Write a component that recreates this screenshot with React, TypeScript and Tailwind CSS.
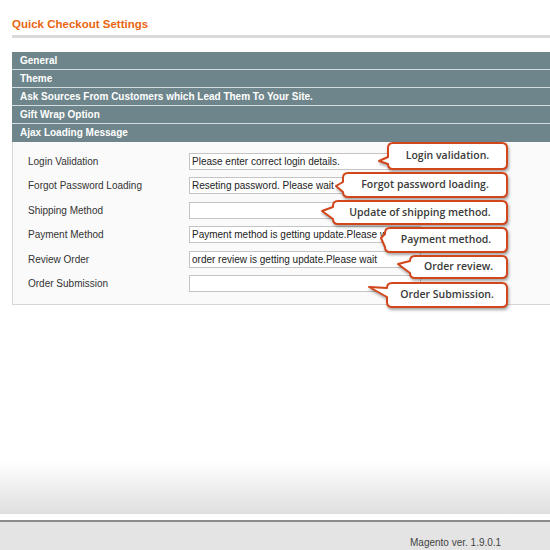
const SECTIONS = [
  'General',
  'Theme',
  'Ask Sources From Customers which Lead Them To Your Site.',
  'Gift Wrap Option',
  'Ajax Loading Message',
]

const FIELDS = [
  { label: 'Login Validation', value: 'Please enter correct login details.' },
  { label: 'Forgot Password Loading', value: 'Reseting password. Please wait' },
  { label: 'Shipping Method', value: '' },
  { label: 'Payment Method', value: 'Payment method is getting update.Please wait' },
  { label: 'Review Order', value: 'order review is getting update.Please wait' },
  { label: 'Order Submission', value: '' },
]

// box edges + tail tip, page coordinates
const CALLOUTS = [
  { text: 'Login validation.', left: 388, top: 143, right: 507, bottom: 169, tipX: 379, tipY: 161 },
  { text: 'Forgot password loading.', left: 343, top: 173, right: 507, bottom: 197, tipX: 336, tipY: 186 },
  { text: 'Update of shipping method.', left: 333, top: 201, right: 507, bottom: 224, tipX: 322, tipY: 211 },
  { text: 'Payment method.', left: 385, top: 228, right: 507, bottom: 252, tipX: 381, tipY: 238 },
  { text: 'Order review.', left: 410, top: 256, right: 507, bottom: 278, tipX: 398, tipY: 264 },
  { text: 'Order Submission.', left: 387, top: 283, right: 507, bottom: 307, tipX: 369, tipY: 287 },
]

type Callout = (typeof CALLOUTS)[number]

function Bubble({ c }: { c: Callout }) {
  const pad = 3
  const x0 = c.tipX - pad
  const y0 = c.top - pad
  const w = c.right - x0 + pad
  const h = c.bottom - y0 + pad
  const bx = c.left - x0
  const t = pad
  const r = w - pad
  const b = h - pad
  const ty = c.tipY - y0
  const tx = c.tipX - x0
  const tTop = Math.max(t + 5, ty - 4)
  const tBot = Math.min(b - 5, ty + 10)
  const rad = 5
  const d = `M ${bx + rad} ${t} H ${r - rad} Q ${r} ${t} ${r} ${t + rad} V ${b - rad} Q ${r} ${b} ${r - rad} ${b} H ${bx + rad} Q ${bx} ${b} ${bx} ${b - rad} V ${tBot} L ${tx} ${ty} L ${bx} ${tTop} V ${t + rad} Q ${bx} ${t} ${bx + rad} ${t} Z`
  return (
    <div className="absolute" style={{ left: x0, top: y0, width: w, height: h }}>
      <svg width={w} height={h} className="absolute left-0 top-0 drop-shadow-[1px_2px_1.5px_rgba(0,0,0,0.35)]">
        <path d={d} fill="#fff" stroke="#d2461b" strokeWidth={2} strokeLinejoin="round" />
      </svg>
      <div
        className="absolute flex items-center justify-center font-['Open_Sans',sans-serif] text-[10.5px] font-semibold text-[#3a3a3a]"
        style={{ left: bx, top: t, width: r - bx, height: b - t }}
      >
        {c.text}
      </div>
    </div>
  )
}

export default function App() {
  return (
    <div className="relative h-[550px] w-[550px] overflow-hidden bg-white font-['Liberation_Sans',Arial,sans-serif]">
      <div className="w-[570px] pl-[12px] pt-[17px]">
        <h1 className="text-[11.5px] font-bold leading-[14px] text-[#e8650f]">Quick Checkout Settings</h1>
        <div className="mt-[4px] h-[3px] bg-[#dadada]" />

        <div className="mt-[14px]">
          {SECTIONS.map((s) => (
            <div
              key={s}
              className="flex h-[18px] items-center border-b border-[#d3dcde] bg-[#6e868b] pl-[8px] text-[10px] font-bold text-white last:border-[#6e868b]"
            >
              {s}
            </div>
          ))}
        </div>

        <div className="border border-t-0 border-[#d6d6d6] bg-[#fafafa] pb-[12px] pl-[15px] pt-[11px]">
          <div className="flex flex-col gap-[7.4px]">
            {FIELDS.map((f) => (
              <div key={f.label} className="flex h-[17px] items-center">
                <span className="w-[161px] text-[10px] text-[#333]">{f.label}</span>
                <div className="flex h-[17px] w-[232px] items-center overflow-hidden whitespace-nowrap border border-[#c4c4c4] bg-white pl-[2px] text-[10px] text-[#222]">
                  {f.value}
                </div>
              </div>
            ))}
          </div>
        </div>
      </div>

      <div className="mt-[156px] h-[53px] bg-gradient-to-b from-white to-[#dfdfdf]" />
      <div className="h-[6px] bg-white" />
      <div className="h-[40px] border-t-2 border-[#8c8c8c] bg-[#e4e4e4] pl-[410px] pt-[13px] text-[10px] text-[#444]">
        Magento ver. 1.9.0.1
      </div>

      {CALLOUTS.map((c) => (
        <Bubble key={c.text} c={c} />
      ))}
    </div>
  )
}
